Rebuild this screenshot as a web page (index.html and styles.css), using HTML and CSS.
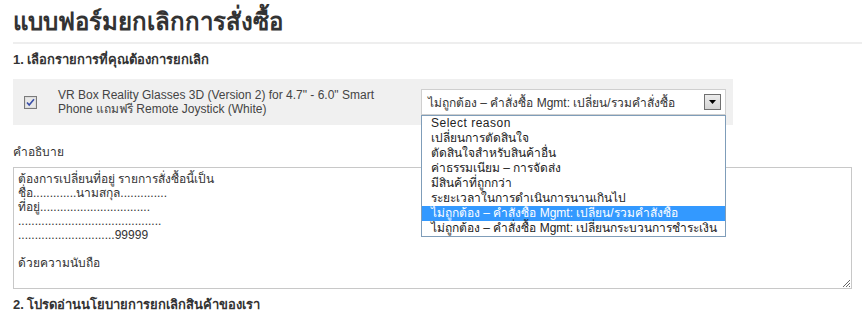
FILE: index.html
```html
<!DOCTYPE html>
<html lang="th">
<head>
<meta charset="utf-8">
<title>แบบฟอร์มยกเลิกการสั่งซื้อ</title>
<link rel="stylesheet" href="styles.css">
</head>
<body>
<div class="page">
  <h1 class="title">แบบฟอร์มยกเลิกการสั่งซื้อ</h1>
  <h2 class="step">1. เลือกรายการที่คุณต้องการยกเลิก</h2>
  <div class="item-row">
    <span class="check"><svg width="13" height="13" viewBox="0 0 13 13"><rect x="0.5" y="0.5" width="12" height="12" fill="#dcdcdc" stroke="#7a7a7a"/><rect x="2" y="2" width="9" height="9" fill="#e8e8e8"/><path d="M3 6.5 L5.2 9 L10 3.2" fill="none" stroke="#3a4fa8" stroke-width="1.6"/></svg></span>
    <div class="item-name">VR Box Reality Glasses 3D (Version 2) for 4.7" - 6.0" Smart Phone แถมฟรี Remote Joystick (White)</div>
    <div class="reason">
      <div class="select">
        <span class="select-text">ไม่ถูกต้อง – คำสั่งซื้อ Mgmt: เปลี่ยน/รวมคำสั่งซื้อ</span>
        <span class="arrow"><svg width="7" height="4" viewBox="0 0 7 4"><path d="M0 0 H7 L3.5 4 Z" fill="#000"/></svg></span>
      </div>
      <ul class="options">
        <li class="latin">Select reason</li>
        <li>เปลี่ยนการตัดสินใจ</li>
        <li>ตัดสินใจสำหรับสินค้าอื่น</li>
        <li>ค่าธรรมเนียม – การจัดส่ง</li>
        <li>มีสินค้าที่ถูกกว่า</li>
        <li>ระยะเวลาในการดำเนินการนานเกินไป</li>
        <li class="active">ไม่ถูกต้อง – คำสั่งซื้อ Mgmt: เปลี่ยน/รวมคำสั่งซื้อ</li>
        <li>ไม่ถูกต้อง – คำสั่งซื้อ Mgmt: เปลี่ยนกระบวนการชำระเงิน</li>
      </ul>
    </div>
  </div>
  <div class="desc-label">คำอธิบาย</div>
  <div class="textarea">
    <div>ต้องการเปลี่ยนที่อยู่ รายการสั่งซื้อนี้เป็น</div>
    <div>ชื่อ.............นามสกุล..............</div>
    <div>ที่อยู่.................................</div>
    <div>...........................................</div>
    <div>.............................99999</div>
    <div>&nbsp;</div>
    <div>ด้วยความนับถือ</div>
    <span class="grip"><svg width="8" height="8" viewBox="0 0 8 8"><path d="M1 8 L8 1 M4 8 L8 4 M7 8 L8 7" stroke="#666" stroke-width="1"/></svg></span>
  </div>
  <h2 class="step step2">2. โปรดอ่านนโยบายการยกเลิกสินค้าของเรา</h2>
</div>
</body>
</html>
```
FILE: styles.css
```css
html, body {
  margin: 0;
  padding: 0;
  background: #fff;
}
body {
  font-family: "Liberation Sans", Arial, "Noto Sans", sans-serif;
  font-size: 12px;
  color: #333;
  overflow: hidden;
}
.page {
  padding-left: 13px;
}
.title {
  margin: 0;
  padding: 6px 0 5px;
  font-size: 24px;
  line-height: 31px;
  font-weight: bold;
  color: #333;
  border-bottom: 2px solid #eee;
}
.step {
  margin: 0;
  font-size: 13px;
  font-weight: bold;
  line-height: 16px;
  padding: 8px 0 10px;
  color: #333;
}
.item-row {
  width: 720px;
  height: 46px;
  background: #f0f0f0;
  display: flex;
  align-items: center;
  margin-top: 1px;
}
.check {
  display: flex;
  margin-left: 11px;
  width: 13px;
  height: 13px;
}
.item-name {
  margin-left: 21px;
  width: 330px;
  font-size: 12px;
  line-height: 14px;
  color: #444;
}
.reason {
  position: relative;
  margin-left: 33px;
  align-self: flex-start;
  margin-top: 10px;
}
.select {
  box-sizing: border-box;
  width: 305px;
  height: 26px;
  background: #fff;
  border: 1px solid #cfcfcf;
  display: flex;
  align-items: center;
  justify-content: space-between;
  padding-left: 6px;
  padding-right: 4px;
  font-size: 12px;
  color: #333;
}
.arrow {
  box-sizing: border-box;
  width: 17px;
  height: 16px;
  border: 1px solid #707070;
  background: linear-gradient(#ececec, #d4d4d4);
  display: flex;
  align-items: center;
  justify-content: center;
}
.options {
  position: absolute;
  left: 0;
  top: 26px;
  margin: 0;
  padding: 0;
  list-style: none;
  box-sizing: border-box;
  width: 305px;
  background: #fff;
  border: 1px solid #7f9db9;
  z-index: 2;
}
.options li {
  height: 15px;
  line-height: 15px;
  padding-left: 9px;
  font-size: 12px;
  color: #222;
  white-space: nowrap;
}
.options li.latin {
  letter-spacing: 0.5px;
}
.options li.active {
  background: #3399ff;
  color: #fff;
}
.desc-label {
  margin-top: 20px;
  line-height: 14px;
  font-size: 12px;
  color: #333;
}
.textarea {
  position: relative;
  box-sizing: border-box;
  margin-top: 8px;
  width: 839px;
  height: 122px;
  border: 1px solid #c8c8c8;
  padding: 4px 4px;
  font-size: 12px;
  line-height: 14px;
  color: #333;
}
.grip {
  position: absolute;
  right: 1px;
  bottom: 1px;
  display: flex;
}
.step2 {
  padding-top: 8px;
}
```
